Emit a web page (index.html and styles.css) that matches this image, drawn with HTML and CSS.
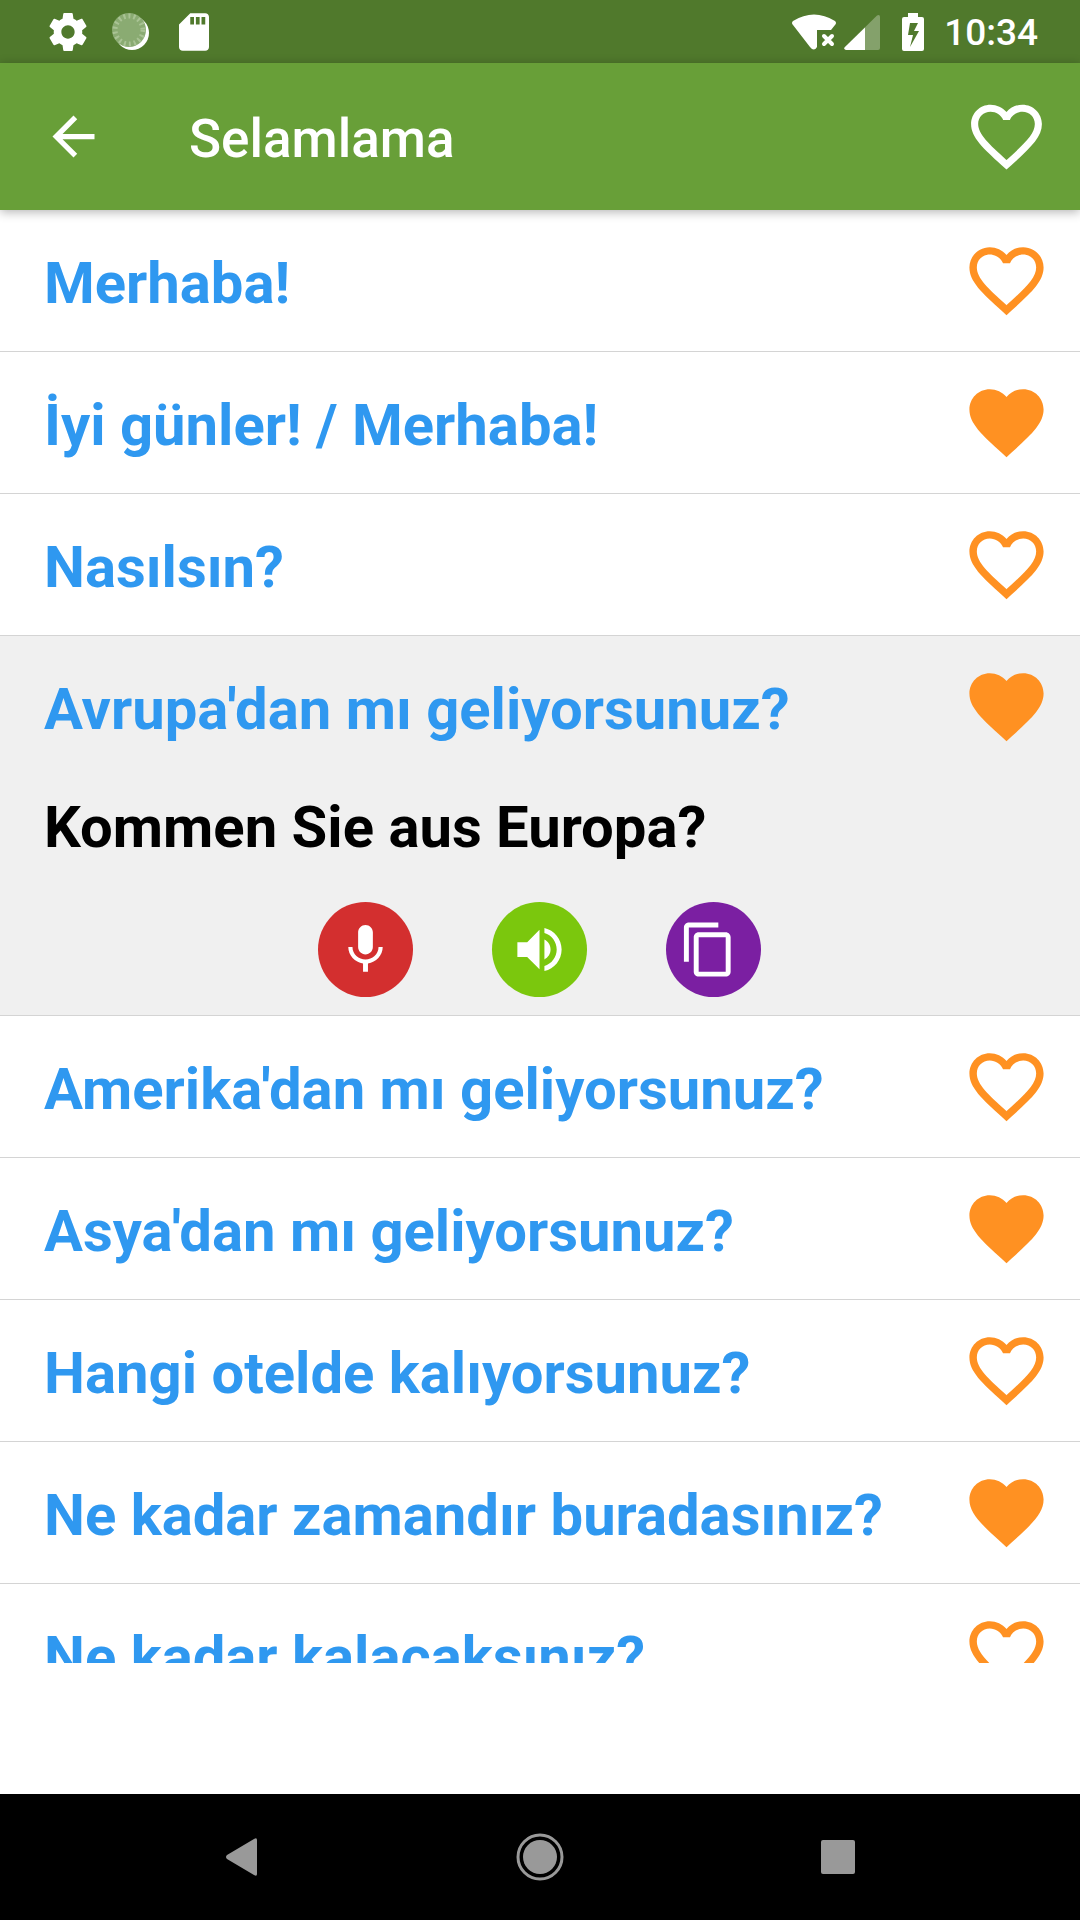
FILE: index.html
```html
<!DOCTYPE html>
<html lang="tr">
<head>
<meta charset="utf-8">
<meta name="viewport" content="width=device-width, initial-scale=1">
<title>Selamlama</title>
<link rel="stylesheet" href="styles.css">
</head>
<body>
<svg class="symbols" aria-hidden="true">
  <symbol id="heart-outline" viewBox="0 0 24 24"><path d="M16.5 3c-1.74 0-3.41.81-4.5 2.09C10.91 3.81 9.24 3 7.5 3 4.42 3 2 5.42 2 8.5c0 3.78 3.4 6.86 8.55 11.54L12 21.35l1.45-1.32C18.6 15.36 22 12.28 22 8.5 22 5.42 19.58 3 16.5 3zm-4.4 15.55l-.1.1-.1-.1C7.14 14.24 4 11.39 4 8.5 4 6.5 5.5 5 7.5 5c1.54 0 3.04.99 3.57 2.36h1.87C13.46 5.99 14.96 5 16.5 5c2 0 3.5 1.5 3.5 3.5 0 2.89-3.14 5.74-7.9 10.05z"/></symbol>
  <symbol id="heart-full" viewBox="0 0 24 24"><path d="M12 21.35l-1.45-1.32C5.4 15.36 2 12.28 2 8.5 2 5.42 4.42 3 7.5 3c1.74 0 3.41.81 4.5 2.09C13.09 3.81 14.76 3 16.5 3 19.58 3 22 5.42 22 8.5c0 3.78-3.4 6.86-8.55 11.54L12 21.35z"/></symbol>
</svg>
<div class="screen">
  <div class="status-bar">
    <div class="status-left">
      <svg width="38" height="38" viewBox="2 2 20 20"><path d="M19.43 12.98c.04-.32.07-.64.07-.98s-.03-.66-.07-.98l2.11-1.65c.19-.15.24-.42.12-.64l-2-3.46c-.12-.22-.39-.3-.61-.22l-2.49 1c-.52-.4-1.08-.73-1.69-.98l-.38-2.65C14.46 2.18 14.25 2 14 2h-4c-.25 0-.46.18-.49.42l-.38 2.65c-.61.25-1.17.59-1.69.98l-2.49-1c-.23-.09-.49 0-.61.22l-2 3.46c-.13.22-.07.49.12.64l2.11 1.65c-.04.32-.07.65-.07.98s.03.66.07.98l-2.11 1.65c-.19.15-.24.42-.12.64l2 3.46c.12.22.39.3.61.22l2.49-1c.52.4 1.08.73 1.69.98l.38 2.65c.03.24.24.42.49.42h4c.25 0 .46-.18.49-.42l.38-2.65c.61-.25 1.17-.59 1.69-.98l2.49 1c.23.09.49 0 .61-.22l2-3.46c.12-.22.07-.49-.12-.64l-2.11-1.65zM12 15.5c-1.93 0-3.5-1.57-3.5-3.5s1.57-3.5 3.5-3.5 3.5 1.57 3.5 3.5-1.57 3.5-3.5 3.5z"/></svg>
      <svg width="38" height="38" viewBox="0 0 38 38"><circle class="dial-edge" cx="20" cy="20" r="17"/><circle class="dial-face" cx="17" cy="17" r="17"/><circle class="dial-ticks" cx="17" cy="17" r="14"/></svg>
      <svg class="sd" width="30" height="38" viewBox="4 2 16 20"><path d="M18 2h-8L4 8v12c0 1.100.9 2 2 2h12c1.100 0 2-.9 2-2V4c0-1.100-.9-2-2-2zm-6 6h-2V4h2v4zm3 0h-2V4h2v4zm3 0h-2V4h2v4z"/></svg>
    </div>
    <div class="status-right">
      <svg class="wifi" width="44" height="36" viewBox="0 0 44 36"><path d="M1 7Q22-6 43 7Q45 9 43 11L39 16H25V33Q22 38 18 33L1 11Q-1 9 1 7z"/><path class="wifi-x" d="M32 22l8 8M40 22l-8 8"/></svg>
      <svg class="signal" width="36" height="36" viewBox="0 0 36 36"><path class="dim" d="M33 1.500Q36 0 36 3V34Q36 36 34 36H2Q-1 35 1 33z"/><path d="M21 13.500V36H2Q-1 35 1 33z"/></svg>
      <svg class="battery" width="22" height="38" viewBox="0 0 22 38"><path fill-rule="evenodd" d="M6 0h10v4h4q2 0 2 2v30q0 2-2 2H2q-2 0-2-2V6q0-2 2-2h4zM8 10L6 22h5L8 34l9-16h-5l4-8z"/></svg>
      <span class="clock">10:34</span>
    </div>
  </div>

  <header class="app-bar">
    <button class="icon-button" type="button" aria-label="Geri"><svg width="63" height="63" viewBox="0 0 24 24"><path d="M20 11H7.830l5.590-5.590L12 4l-8 8 8 8 1.410-1.410L7.830 13H20v-2z"/></svg></button>
    <h1 class="title">Selamlama</h1>
    <button class="icon-button" type="button" aria-label="Favoriler"><svg width="85" height="85"><use href="#heart-outline"/></svg></button>
  </header>

  <main class="content">
    <ul class="phrases">
      <li class="phrase"><div class="row"><span class="text">Merhaba!</span><button class="icon-button fav" type="button" aria-label="Favorilere ekle"><svg width="89" height="89"><use href="#heart-outline"/></svg></button></div></li>
      <li class="phrase"><div class="row"><span class="text">İyi günler! / Merhaba!</span><button class="icon-button fav" type="button" aria-label="Favorilerden çıkar"><svg width="89" height="89"><use href="#heart-full"/></svg></button></div></li>
      <li class="phrase"><div class="row"><span class="text">Nasılsın?</span><button class="icon-button fav" type="button" aria-label="Favorilere ekle"><svg width="89" height="89"><use href="#heart-outline"/></svg></button></div></li>
      <li class="phrase open">
        <div class="row"><span class="text">Avrupa'dan mı geliyorsunuz?</span><button class="icon-button fav" type="button" aria-label="Favorilerden çıkar"><svg width="89" height="89"><use href="#heart-full"/></svg></button></div>
        <p class="translation" lang="de">Kommen Sie aus Europa?</p>
        <div class="actions">
          <button class="action record" type="button" aria-label="Kaydet"><svg width="59" height="59" viewBox="0 0 24 24"><path d="M12 14c1.660 0 2.990-1.340 2.990-3L15 5c0-1.660-1.340-3-3-3S9 3.340 9 5v6c0 1.660 1.340 3 3 3zm5.300-3c0 3-2.540 5.100-5.300 5.100S6.700 14 6.700 11H5c0 3.410 2.720 6.230 6 6.720V21h2v-3.280c3.280-.48 6-3.300 6-6.720h-1.700z"/></svg></button>
          <button class="action listen" type="button" aria-label="Dinle"><svg width="59" height="59" viewBox="0 0 24 24"><path d="M3 9v6h4l5 5V4L7 9H3zm13.500 3c0-1.770-1.020-3.290-2.500-4.030v8.050c1.480-.73 2.500-2.250 2.500-4.020zM14 3.230v2.060c2.890.86 5 3.540 5 6.710s-2.110 5.850-5 6.710v2.060c4.010-.91 7-4.490 7-8.770s-2.990-7.860-7-8.770z"/></svg></button>
          <button class="action copy" type="button" aria-label="Kopyala"><svg width="59" height="59" viewBox="0 0 24 24"><path d="M16 1H4c-1.100 0-2 .9-2 2v14h2V3h12V1zm3 4H8c-1.100 0-2 .9-2 2v14c0 1.100.9 2 2 2h11c1.100 0 2-.9 2-2V7c0-1.100-.9-2-2-2zm0 16H8V7h11v14z"/></svg></button>
        </div>
      </li>
      <li class="phrase"><div class="row"><span class="text">Amerika'dan mı geliyorsunuz?</span><button class="icon-button fav" type="button" aria-label="Favorilere ekle"><svg width="89" height="89"><use href="#heart-outline"/></svg></button></div></li>
      <li class="phrase"><div class="row"><span class="text">Asya'dan mı geliyorsunuz?</span><button class="icon-button fav" type="button" aria-label="Favorilerden çıkar"><svg width="89" height="89"><use href="#heart-full"/></svg></button></div></li>
      <li class="phrase"><div class="row"><span class="text">Hangi otelde kalıyorsunuz?</span><button class="icon-button fav" type="button" aria-label="Favorilere ekle"><svg width="89" height="89"><use href="#heart-outline"/></svg></button></div></li>
      <li class="phrase"><div class="row"><span class="text">Ne kadar zamandır buradasınız?</span><button class="icon-button fav" type="button" aria-label="Favorilerden çıkar"><svg width="89" height="89"><use href="#heart-full"/></svg></button></div></li>
      <li class="phrase"><div class="row"><span class="text">Ne kadar kalacaksınız?</span><button class="icon-button fav" type="button" aria-label="Favorilere ekle"><svg width="89" height="89"><use href="#heart-outline"/></svg></button></div></li>
    </ul>
  </main>
  <div class="banner-space"></div>

  <nav class="nav-bar" aria-label="Sistem">
    <button class="icon-button" type="button" aria-label="Geri"><svg width="48" height="48" viewBox="0 0 48 48"><path d="M36 6q3-2 3 1v34q0 3-3 1L9 26q-2-2 0-4z"/></svg></button>
    <button class="icon-button" type="button" aria-label="Ana ekran"><svg width="48" height="48" viewBox="0 0 48 48"><circle cx="24" cy="24" r="17"/><circle class="ring" cx="24" cy="24" r="22"/></svg></button>
    <button class="icon-button" type="button" aria-label="Son uygulamalar"><svg width="48" height="48" viewBox="0 0 48 48"><rect x="7" y="7" width="34" height="34" rx="2"/></svg></button>
  </nav>
</div>
</body>
</html>
```
FILE: styles.css
```css
* {
  box-sizing: border-box;
}

body {
  margin: 0;
  background: #fff;
  font-family: Roboto, "Noto Sans", sans-serif;
}

svg {
  display: block;
  flex: none;
  fill: currentColor;
}

.symbols {
  display: none;
}

.screen {
  display: flex;
  flex-direction: column;
  height: 100vh;
}

/* System status bar */
.status-bar {
  display: flex;
  flex: none;
  justify-content: space-between;
  align-items: center;
  height: 63px;
  padding: 0 42px 0 49px;
  background: #50792c;
  color: #fff;
}

.status-left,
.status-right {
  display: flex;
  align-items: center;
}

.status-left {
  gap: 25px;
}

.sd {
  margin-left: 4px;
}

.dial-face {
  fill: #8aab72;
}

.dial-ticks {
  fill: none;
  stroke: #a9c394;
  stroke-width: 5;
  stroke-dasharray: 2 3;
}

.wifi-x {
  fill: none;
  stroke: currentColor;
  stroke-width: 4;
  stroke-linecap: round;
}

.signal {
  margin-left: 8px;
}

.dim {
  opacity: 0.3;
}

.battery {
  margin-left: 22px;
}

.clock {
  margin-left: 20px;
  padding-top: 3px;
  font-size: 37px;
  font-weight: 500;
  line-height: 44px;
}

/* App bar */
.icon-button {
  flex: none;
  padding: 0;
  border: 0;
  background: none;
  color: inherit;
}

.app-bar {
  position: relative;
  display: flex;
  flex: none;
  align-items: center;
  height: 147px;
  padding: 0 31px 0 42px;
  background: #689f38;
  box-shadow: 0 2px 10px rgba(0, 0, 0, 0.3);
  color: #fff;
}

.title {
  flex: 1;
  margin: 0;
  padding: 4px 0 0 84px;
  font-size: 53px;
  font-weight: 500;
  line-height: 64px;
}

/* Phrase list */
.content {
  flex: 1;
  min-height: 0;
  overflow: hidden;
}

.phrases {
  margin: 0;
  padding: 0;
  list-style: none;
}

.phrase {
  border-bottom: 1px solid #d4d4d4;
}

.open {
  background: #f0f0f0;
}

.row {
  display: flex;
  justify-content: space-between;
  align-items: center;
  height: 141px;
  padding: 0 29px 0 44px;
}

.text,
.translation {
  font-size: 58px;
  font-weight: 700;
  line-height: 68px;
}

.text {
  padding-top: 4px;
  color: #2f98f0;
}

.fav {
  color: #ff9122;
}

.translation {
  margin: 0;
  padding: 16px 44px 0;
  color: #000;
}

.actions {
  display: flex;
  justify-content: center;
  gap: 79px;
  padding: 41px 2px 18px 0;
}

.action {
  display: flex;
  justify-content: center;
  align-items: center;
  width: 95px;
  height: 95px;
  padding: 0;
  border: 0;
  border-radius: 50%;
  color: #fff;
}

.record {
  background: #d32f2f;
}

.listen {
  background: #7bc70d;
}

.copy {
  padding-right: 10px;
  background: #7b1fa2;
}

.banner-space {
  flex: none;
  height: 131px;
}

/* System navigation bar */
.nav-bar {
  display: flex;
  flex: none;
  justify-content: center;
  align-items: center;
  gap: 250px;
  height: 126px;
  background: #000;
  color: #999;
}

.ring {
  fill: none;
  stroke: currentColor;
  stroke-width: 3;
}
```
